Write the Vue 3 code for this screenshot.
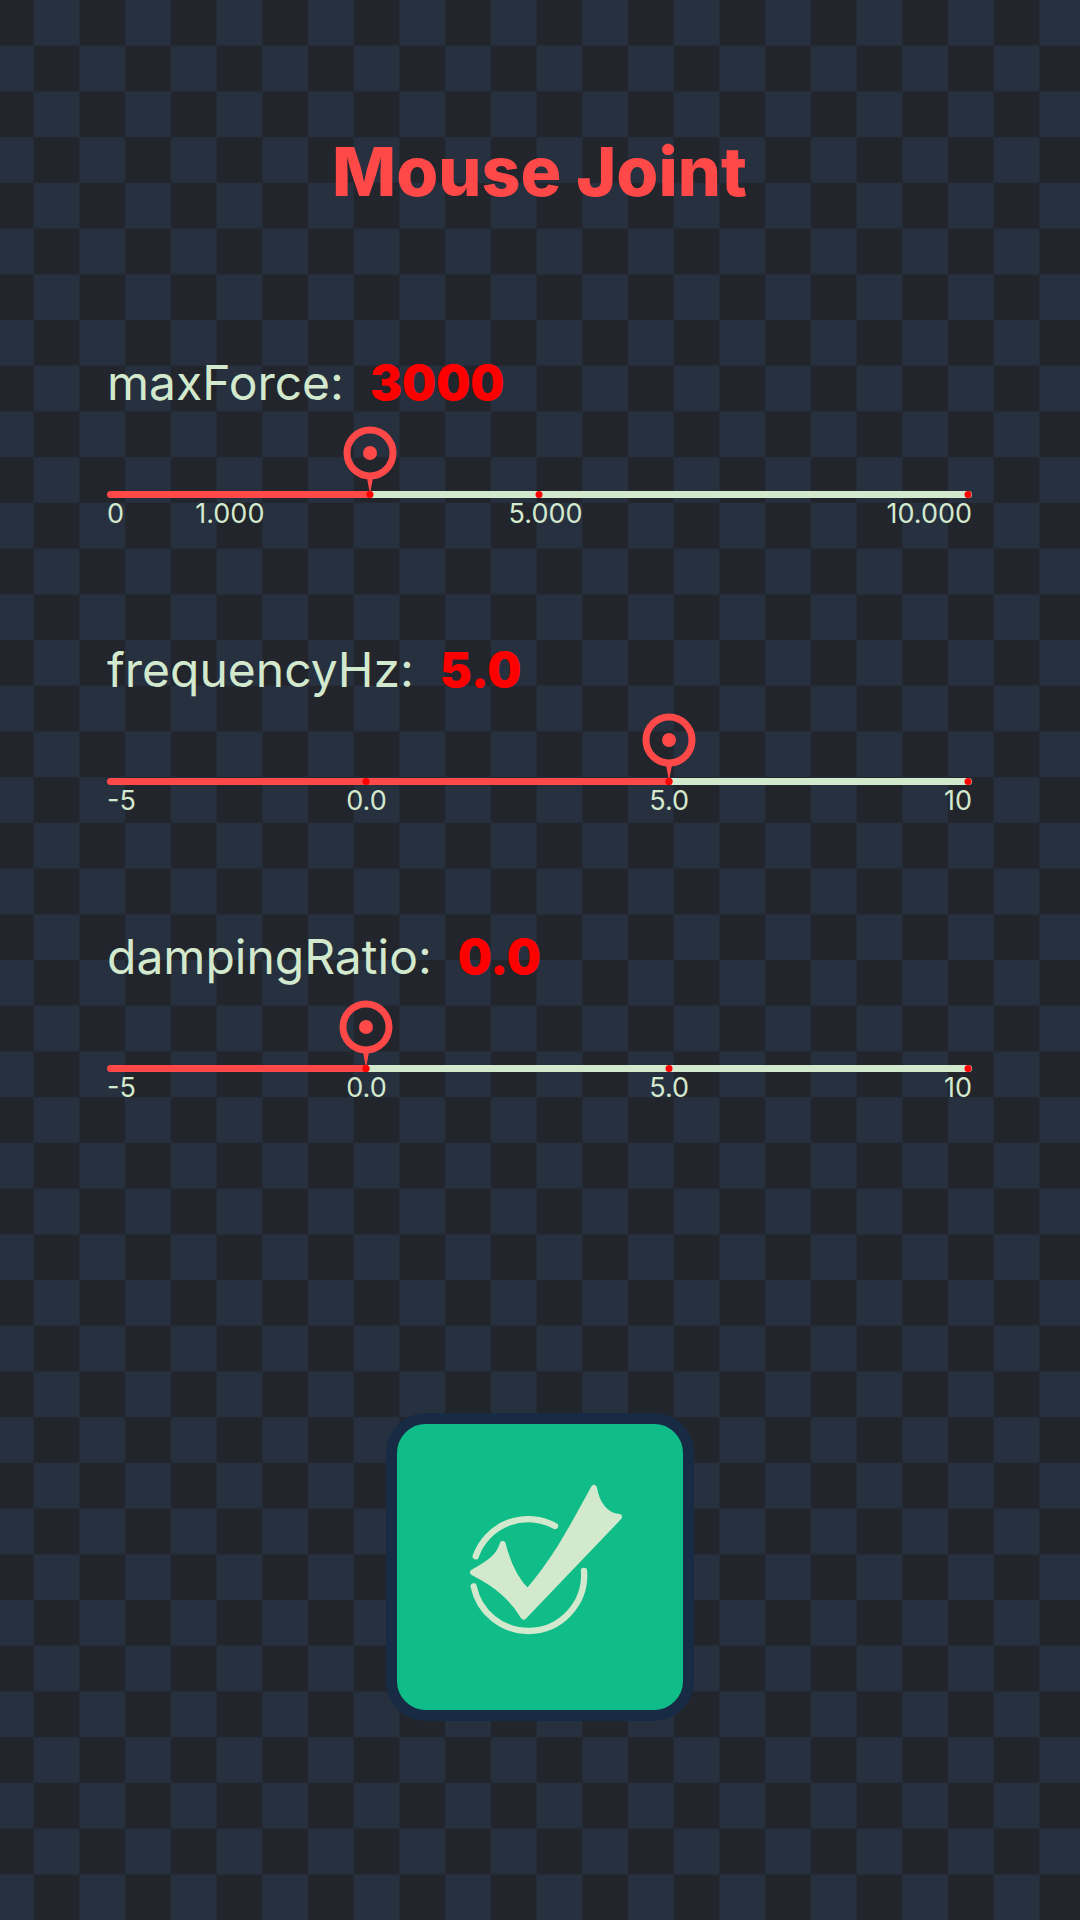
<script setup>
import { reactive } from 'vue'

// Each stop pairs a place on the rail (percent) with the value it stands for.
const bipolarStops = [[0, -5], [29.8, 0], [65.2, 5], [100, 10]]
const bipolarTicks = [
  { at: 0, text: '-5', edge: 'start' },
  { at: 30, text: '0.0' },
  { at: 65, text: '5.0' },
  { at: 100, text: '10', edge: 'end' }
]

const settings = reactive([
  {
    id: 'maxForce',
    position: 30.3,
    digits: 0,
    stops: [[0, 0], [14, 1000], [30.3, 3000], [50, 5000], [100, 10000]],
    dots: [50, 100],
    ticks: [
      { at: 0, text: '0', edge: 'start' },
      { at: 14.2, text: '1.000' },
      { at: 50.7, text: '5.000' },
      { at: 100, text: '10.000', edge: 'end' }
    ]
  },
  { id: 'frequencyHz', position: 65.2, digits: 1, stops: bipolarStops, dots: [29.8, 65.2, 100], ticks: bipolarTicks },
  { id: 'dampingRatio', position: 29.8, digits: 1, stops: bipolarStops, dots: [29.8, 65.2, 100], ticks: bipolarTicks }
])

function valueOf(setting) {
  const { stops, position, digits } = setting
  const i = Math.max(1, stops.findIndex(([p]) => p >= position))
  const [p0, v0] = stops[i - 1]
  const [p1, v1] = stops[i]
  return (v0 + ((position - p0) / (p1 - p0)) * (v1 - v0)).toFixed(digits)
}
</script>

<template>
  <main class="screen">
    <svg class="checker" viewBox="0 0 1890 3360" preserveAspectRatio="xMinYMin slice" aria-hidden="true">
      <defs>
        <pattern id="cells" x="59" y="0" width="160" height="160" patternUnits="userSpaceOnUse">
          <path d="M0 0h80v80H0zM80 80h80v80H80z" fill="#27303f" />
        </pattern>
      </defs>
      <rect width="1890" height="3360" fill="#22252c" />
      <rect width="1890" height="3360" fill="url(#cells)" />
    </svg>

    <h1 class="title">Mouse Joint</h1>

    <form class="form" @submit.prevent>
      <div class="fields">
        <div v-for="s in settings" :key="s.id" class="field">
          <div class="caption">
            <label :for="s.id">{{ s.id }}:</label>
            <output :for="s.id" class="value">{{ valueOf(s) }}</output>
          </div>
          <div class="slider" :style="{ '--pos': s.position / 100 }">
            <input :id="s.id" v-model.number="s.position" class="rail" type="range" min="0" max="100" step="0.1" />
            <div class="overlay">
              <svg class="pin" :style="{ left: s.position + '%' }" viewBox="0 0 54 68" aria-hidden="true">
                <path d="M24 52h6l-3 16z" fill="#ff4949" />
                <circle cx="27" cy="27" r="23" fill="none" stroke="#ff4949" stroke-width="7" />
                <circle cx="27" cy="27" r="7" fill="#ff4949" />
              </svg>
              <span v-for="d in s.dots" :key="d" class="dot" :style="{ left: d + '%' }"></span>
              <span class="dot" :style="{ left: s.position + '%' }"></span>
            </div>
          </div>
          <div class="ticks">
            <span v-for="t in s.ticks" :key="t.text" class="tick" :class="t.edge" :style="{ left: t.at + '%' }">{{ t.text }}</span>
          </div>
        </div>
      </div>

      <button class="confirm" type="submit" aria-label="Confirm">
        <svg viewBox="81 72 858 858" aria-hidden="true">
          <g fill="none" stroke="#d3e9ce" stroke-width="19" stroke-linecap="round">
            <path d="M317 469A167 167 0 0 1 555 378" />
            <path d="M311 559A168 168 0 0 0 475 693A168 168 0 0 0 642 513" />
          </g>
          <path
            d="M398 432C413 492 438 543 473 576C550 485 590 415 672 264C680 311 705 347 747 351L461 650C425 592 385 556 309 517C360 489 388 468 398 432Z"
            fill="#d3e9ce" stroke="#d3e9ce" stroke-width="18" stroke-linejoin="round"
          />
        </svg>
      </button>
    </form>
  </main>
</template>

<style>
body {
  background: #22252c;
}
</style>

<style scoped>
.screen {
  position: relative;
  box-sizing: border-box;
  min-height: 100vh;
  padding: 129px 108px 199px 107px;
  color: #d3e9ce;
  font-family: Inter, "Liberation Sans", sans-serif;
}

.checker {
  position: absolute;
  inset: 0;
  z-index: -1;
  width: 100%;
  height: 100%;
}

.title {
  margin: 0 0 141px;
  color: #ff4949;
  font-size: 68px;
  font-weight: 800;
  line-height: 84px;
  text-align: center;
}

.form {
  display: flex;
  flex-direction: column;
  gap: 309px;
}

.fields {
  display: flex;
  flex-direction: column;
  gap: 111px;
}

.caption {
  display: flex;
  gap: 26px;
  margin-bottom: 14px;
  font-size: 48px;
  font-weight: 400;
  line-height: 58px;
}

.value {
  color: #ff0000;
  font-weight: 900;
}

.slider {
  position: relative;
  display: flex;
  align-items: flex-end;
  height: 72px;
}

.rail {
  appearance: none;
  width: 100%;
  height: 7px;
  margin: 0;
  border-radius: 4px;
  background: linear-gradient(to right, #ff4949 calc(4px + (100% - 7px) * var(--pos)), #d3e9ce 0);
  cursor: pointer;
}

.rail::-webkit-slider-thumb {
  appearance: none;
  width: 7px;
  height: 7px;
  background: transparent;
}

.overlay {
  position: absolute;
  inset: 0 4px 0 3px;
  pointer-events: none;
}

.pin {
  position: absolute;
  top: 0;
  width: 54px;
  height: 68px;
  transform: translateX(-50%);
}

.dot {
  position: absolute;
  bottom: 0;
  width: 7px;
  height: 7px;
  border-radius: 50%;
  background: #ff0000;
  transform: translateX(-50%);
}

.ticks {
  position: relative;
  height: 32px;
  font-size: 27px;
  font-weight: 400;
  line-height: 32px;
}

.tick {
  position: absolute;
  transform: translateX(-50%);
}

.tick.start {
  transform: none;
}

.tick.end {
  transform: translateX(-100%);
}

.confirm {
  box-sizing: border-box;
  align-self: center;
  width: 308px;
  height: 308px;
  padding: 0;
  border: 11px solid #182b45;
  border-radius: 40px;
  background: #10bd89;
  cursor: pointer;
}

.confirm svg {
  display: block;
  width: 100%;
}
</style>
